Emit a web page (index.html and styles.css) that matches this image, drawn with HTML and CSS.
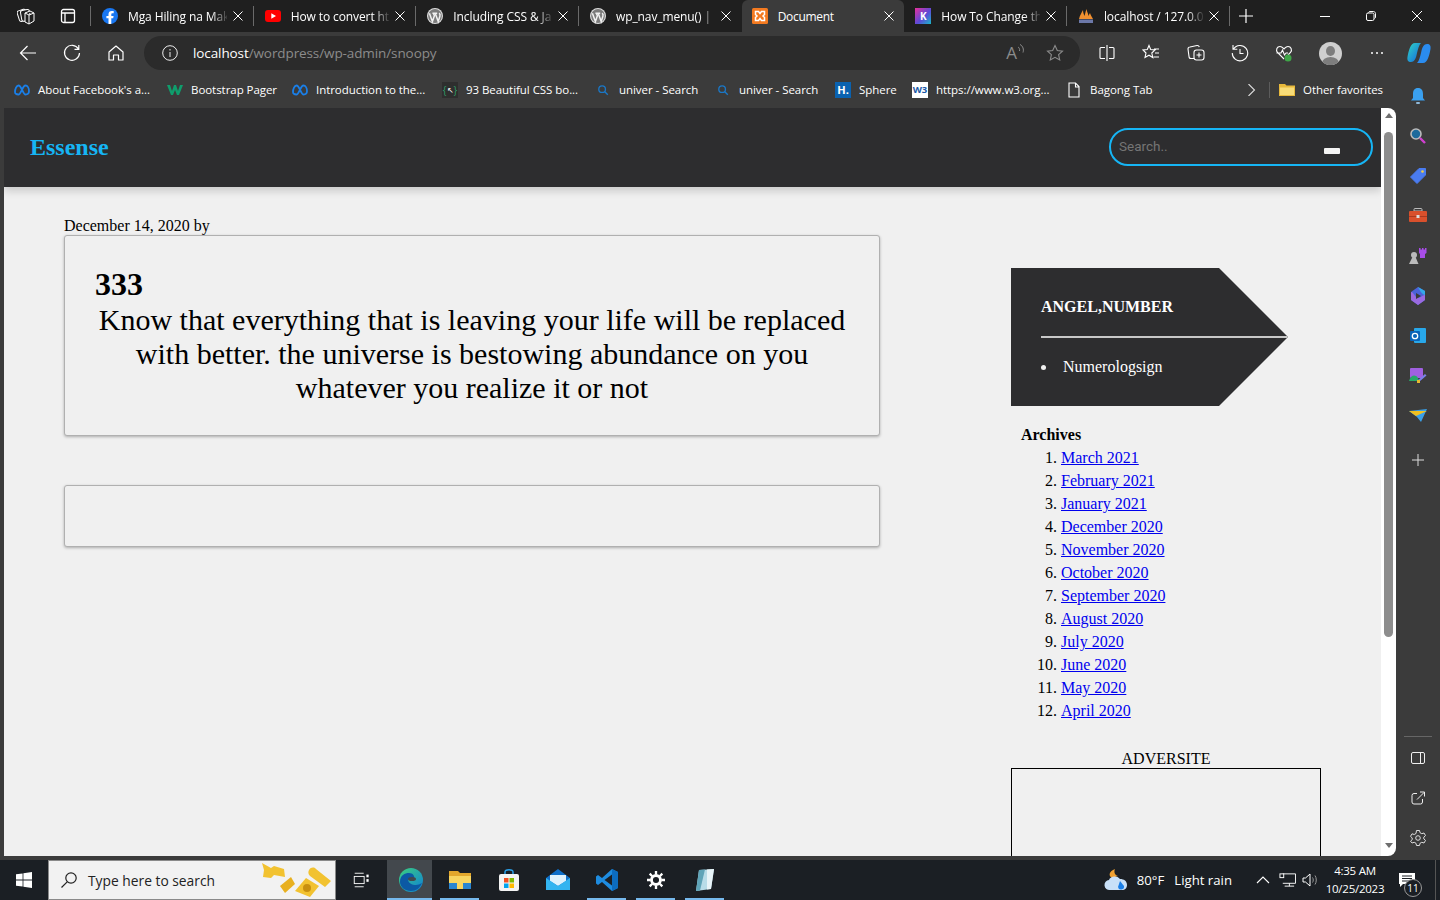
FILE: index.html
```html
<!DOCTYPE html>
<html lang="en">
<head>
  <meta charset="UTF-8" />
  <meta name="viewport" content="width=device-width, initial-scale=1.0" />
  <title>Document</title>
  <link rel="stylesheet" href="styles.css">
</head>
<body>
  <svg class="defs" width="0" height="0">
    <defs>
      <symbol id="x" viewBox="0 0 12 12"><path d="M1.5 1.5l9 9M10.5 1.5l-9 9" fill="none" stroke="currentColor" stroke-width="1"/></symbol>
      <symbol id="wp" viewBox="0 0 16 16"><circle cx="8" cy="8" r="8" fill="#dedede"/><circle cx="8" cy="8" r="6.9" fill="#7c7c7c"/><path d="M2.4 5.2l3 8.300 2-5.700-1-2.600h-1M5.800 5.200h4.400M8.200 5.200l3 8.300 1.700-5.200c.5-1.600-.1-2.600-.8-3.100" fill="none" stroke="#f2f2f2" stroke-width="1.500"/></symbol>
      <symbol id="meta" viewBox="0 0 16 12"><path d="M1 8C1 5 2.500 1.500 4.500 1.500c3 0 4.500 9 7 9 1.500 0 3.500-1 3.500-3.500 0-3-1.500-5.500-3.500-5.500-3 0-4.500 9-7 9C2 10.500 1 9.500 1 8z" fill="none" stroke="#1a7fe8" stroke-width="1.800"/></symbol>
      <symbol id="mag" viewBox="0 0 16 16"><circle cx="7" cy="7" r="3.800" fill="none" stroke="#1a78c8" stroke-width="1.500"/><path d="M10 10l3.500 3.500" stroke="#1a78c8" stroke-width="1.500"/></symbol>
    </defs>
  </svg>

  <!-- browser tabs -->
  <div class="tabstrip">
    <div class="strip-start">
      <svg class="ico18" viewBox="0 0 18 18" fill="none" stroke="#fff" stroke-width="1"><rect x="1" y="3" width="9" height="11" rx="2" transform="rotate(-18 5 8)"/><rect x="4" y="3" width="9" height="11" rx="2" transform="rotate(-10 8 8)" fill="#1f1f1f"/><path d="M8 6l5-2 4 2v8l-5 3-4-2zM12 8v9M8 6l4 2 5-2" fill="#1f1f1f"/></svg>
      <svg class="ico16" viewBox="0 0 16 16" fill="none" stroke="#fff" stroke-width="1.300"><rect x="1.500" y="1.500" width="13" height="13" rx="2"/><path d="M1.500 5h13M5 5v9.500"/></svg>
    </div>
    <div class="tab">
      <svg class="ico16" viewBox="0 0 16 16"><circle cx="8" cy="8" r="8" fill="#1877f2"/><path d="M9.300 16V10.300h1.900l.4-2.400H9.300V6.400c0-.7.300-1.200 1.300-1.200h1.100V3.100s-1-.2-2-.2C7.700 2.900 6.500 4.100 6.500 6.200v1.700H4.400v2.400h2.100V16z" fill="#fff"/></svg>
      <span class="tab-title">Mga Hiling na Mak</span>
      <svg class="tab-close"><use href="#x"/></svg>
    </div>
    <div class="tab">
      <svg class="ico16" viewBox="0 0 16 12"><rect width="16" height="12" rx="3" fill="#f00"/><path d="M6.300 3.300L11 6l-4.700 2.700z" fill="#fff"/></svg>
      <span class="tab-title">How to convert htr</span>
      <svg class="tab-close"><use href="#x"/></svg>
    </div>
    <div class="tab">
      <svg class="ico16"><use href="#wp"/></svg>
      <span class="tab-title">Including CSS &amp; Ja</span>
      <svg class="tab-close"><use href="#x"/></svg>
    </div>
    <div class="tab tab-before-active">
      <svg class="ico16"><use href="#wp"/></svg>
      <span class="tab-title">wp_nav_menu() | F</span>
      <svg class="tab-close"><use href="#x"/></svg>
    </div>
    <div class="tab tab-active">
      <svg class="ico16" viewBox="0 0 16 16"><rect width="16" height="16" rx="1.500" fill="#f37a20"/><path d="M3.500 3.500h3l1.500 2 1.500-2h3v3l-1.500 1.500 1.500 1.500v3h-3L8 10.500l-1.500 2h-3v-3L5 8 3.500 6.500z" fill="none" stroke="#fff" stroke-width="1.500"/></svg>
      <span class="tab-title tab-title-full">Document</span>
      <svg class="tab-close"><use href="#x"/></svg>
    </div>
    <div class="tab">
      <span class="fav-k">K</span>
      <span class="tab-title">How To Change th</span>
      <svg class="tab-close"><use href="#x"/></svg>
    </div>
    <div class="tab">
      <svg class="ico16" viewBox="0 0 16 16"><path d="M1 11C2 7 3.500 5 5 2c0 3 1 4 1.500 6C7 6 7.500 4 8.500 1c.5 3 1.500 4 2 7 .5-1.500 1-2.500 1.500-3 .5 2 2 4 3 6z" fill="#f09030"/><rect x="1" y="11.500" width="14" height="3.500" fill="#6c78a8"/></svg>
      <span class="tab-title">localhost / 127.0.0.</span>
      <svg class="tab-close"><use href="#x"/></svg>
    </div>
    <svg class="new-tab" viewBox="0 0 14 14" fill="none" stroke="#fff" stroke-width="1.200"><path d="M7 0v14M0 7h14"/></svg>
    <div class="window-controls">
      <svg class="ico10" viewBox="0 0 10 10" stroke="#fff" fill="none"><path d="M0 5.500h10"/></svg>
      <svg class="ico10" viewBox="0 0 10 10" stroke="#fff" fill="none"><rect x=".5" y="2" width="7.500" height="7.500" rx="1.500"/><path d="M2.500 1.500c.3-.7.800-1 1.500-1h3.500c1 0 2 1 2 2V6c0 .7-.3 1.200-1 1.500"/></svg>
      <svg class="ico10" viewBox="0 0 10 10" stroke="#fff" fill="none"><path d="M0 0l10 10M10 0L0 10"/></svg>
    </div>
  </div>

  <!-- address bar row -->
  <div class="toolbar">
    <svg class="ico20 nav-back" viewBox="0 0 18 18" fill="none" stroke="#fff" stroke-width="1.200"><path d="M17 9H1.500M8.500 2l-7 7 7 7"/></svg>
    <svg class="ico20 nav-reload" viewBox="0 0 18 18" fill="none" stroke="#fff" stroke-width="1.200"><path d="M15.500 5A7.500 7.500 0 1 0 16.500 9M15.800 1v4.300h-4.300"/></svg>
    <svg class="ico20 nav-home" viewBox="0 0 18 18" fill="none" stroke="#fff" stroke-width="1.200"><path d="M2 8l7-6 7 6v8h-4.500v-5h-5v5H2z" stroke-linejoin="round"/></svg>
    <div class="address">
      <svg class="ico16 addr-info" viewBox="0 0 16 16" fill="none" stroke="#eee"><circle cx="8" cy="8" r="7.300"/><path d="M8 7v5M8 4v1.500"/></svg>
      <span class="url"><span class="url-host">localhost</span>/wordpress/wp-admin/snoopy</span>
      <span class="read-aloud">A<svg class="waves" viewBox="0 0 8 12" fill="none" stroke="#8c8c8c"><path d="M1 4c1 .5 2 2 1.500 4M3 1.500c3 1.500 4 5 3 8"/></svg></span>
      <svg class="ico18 addr-star" viewBox="0 0 18 18" fill="none" stroke="#8c8c8c" stroke-width="1.100"><path d="M9 1.500l2.300 5 5.200.6-3.900 3.600 1.100 5.300L9 13.300 4.300 16l1.100-5.300L1.500 7.100l5.200-.6z"/></svg>
    </div>
    <div class="tool-icons">
      <svg class="ico18" viewBox="0 0 18 18" fill="none" stroke="#fff" stroke-width="1.100"><path d="M9 1v16M7 3.500H3a1 1 0 0 0-1 1v9a1 1 0 0 0 1 1h4M11 3.500h4a1 1 0 0 1 1 1v9a1 1 0 0 1-1 1h-4"/></svg>
      <svg class="ico18" viewBox="0 0 18 18" fill="none" stroke="#fff" stroke-width="1.100"><path d="M7 1.500l1.700 4 4.300.5-3.200 3 1 4.500L7 11.200 3 13.500l1-4.500L1 6l4.300-.5zM12 5h5M13 9h4M11.500 13h5.500"/></svg>
      <svg class="ico18" viewBox="0 0 18 18" fill="none" stroke="#fff" stroke-width="1.100"><path d="M7 14.500H4a2 2 0 0 1-2-2L1 5a2 2 0 0 1 2-2l7-1.500c1-.2 2 .5 2.300 1.500"/><rect x="7" y="6" width="10" height="10" rx="2.500"/><path d="M12 8.500v5M9.500 11h5"/></svg>
      <svg class="ico18" viewBox="0 0 18 18" fill="none" stroke="#fff" stroke-width="1.100"><path d="M2.500 5A7.700 7.700 0 1 1 1.300 9M2 1v4.300h4.300M9 5v4.500h3.500"/></svg>
      <svg class="ico18" viewBox="0 0 18 18" fill="none" stroke="#fff" stroke-width="1.100"><path d="M9 15L2.500 8.500C.5 6 2 2.500 5 2.500c2 0 3 1.500 4 2.500 1-1 2-2.500 4-2.500 3 0 4.500 3.500 2.500 6L13 11M1.500 9H6l1.500-3 2 5 1.500-2h2"/><circle cx="13" cy="14" r="3.500" fill="#3fa648" stroke="none"/></svg>
    </div>
    <div class="avatar"><span class="avatar-head"></span><span class="avatar-body"></span></div>
    <svg class="tool-dots" viewBox="0 0 14 4" fill="#fff"><circle cx="2" cy="2" r="1"/><circle cx="7" cy="2" r="1"/><circle cx="12" cy="2" r="1"/></svg>
    <svg class="copilot" viewBox="0 0 24 22">
      <defs><linearGradient id="cop" x1="0" y1="0" x2="1" y2="1"><stop offset="0" stop-color="#2fd6c4"/><stop offset="1" stop-color="#1464e0"/></linearGradient></defs>
      <path d="M8 1h6c-2 2-3 6-4 10-1 6-3 9-6 9-3 0-4-2-3.500-5C1.500 9 3.500 1 8 1z" fill="url(#cop)"/><path d="M16 21h-6c2-2 3-6 4-10 1-6 3-9 6-9 3 0 4 2 3.500 5-1 6-3 14-7.500 14z" fill="#2a8cf0"/>
    </svg>
  </div>

  <!-- favorites -->
  <div class="favbar">
    <div class="fav"><svg class="fav-meta"><use href="#meta"/></svg><span>About Facebook's a...</span></div>
    <div class="fav"><svg class="ico16" viewBox="0 0 16 12"><path d="M0 1h3l2 6 2-6h2l2 6 2-6h3l-4 10h-2L8 6l-2 5H4z" fill="#0f9d6c"/></svg><span>Bootstrap Pager</span></div>
    <div class="fav"><svg class="fav-meta"><use href="#meta"/></svg><span>Introduction to the...</span></div>
    <div class="fav"><span class="fav-css">{<i>↖</i>}</span><span>93 Beautiful CSS bo...</span></div>
    <div class="fav fav-wide"><svg class="ico14"><use href="#mag"/></svg><span>univer - Search</span></div>
    <div class="fav fav-wide"><svg class="ico14"><use href="#mag"/></svg><span>univer - Search</span></div>
    <div class="fav"><span class="fav-h">H.</span><span>Sphere</span></div>
    <div class="fav"><span class="fav-w3">W3</span><span>https://www.w3.org...</span></div>
    <div class="fav"><svg class="ico16" viewBox="0 0 16 16" fill="none" stroke="#fff" stroke-width="1.100"><path d="M3 1h6.500L13 4.500V15H3zM9.500 1v4H13"/></svg><span>Bagong Tab</span></div>
    <div class="fav-end">
      <svg class="ico12" viewBox="0 0 12 12" fill="none" stroke="#ddd" stroke-width="1.100"><path d="M3.500 0l6 6-6 6"/></svg>
      <span class="fav-sep"></span>
      <svg class="ico16" viewBox="0 0 16 16"><path d="M0 2h6l1.500 1.500H16V14H0z" fill="#e8b93c"/><path d="M1 5.500h14V13H1z" fill="#f8dc78"/></svg>
      <span class="fav-other">Other favorites</span>
    </div>
  </div>

  <div class="browser-body">
    <div class="viewport">
      <div class="page">
        <header class="site-header">
          <h1 class="logo">Essense</h1>
          <div class="search">
            <span class="search-hint">Search..</span>
            <span class="search-btn"></span>
          </div>
        </header>

        <div class="content">
          <main class="posts">
            <div class="post-meta">December 14, 2020 by</div>
            <article class="card card-quote">
              <h2>333</h2>
              <p>Know that everything that is leaving your life will be replaced with better. the universe is bestowing abundance on you whatever you realize it or not</p>
            </article>
            <article class="card card-empty"></article>
          </main>

          <aside class="sidebar">
            <div class="arrow-box">
              <h4>ANGEL,NUMBER</h4>
              <hr>
              <ul>
                <li>Numerologsign</li>
              </ul>
            </div>
            <div class="archives">
              <strong>Archives</strong>
              <ol>
                <li><a href="#">March 2021</a></li>
                <li><a href="#">February 2021</a></li>
                <li><a href="#">January 2021</a></li>
                <li><a href="#">December 2020</a></li>
                <li><a href="#">November 2020</a></li>
                <li><a href="#">October 2020</a></li>
                <li><a href="#">September 2020</a></li>
                <li><a href="#">August 2020</a></li>
                <li><a href="#">July 2020</a></li>
                <li><a href="#">June 2020</a></li>
                <li><a href="#">May 2020</a></li>
                <li><a href="#">April 2020</a></li>
              </ol>
            </div>
            <div class="advert">
              <div class="advert-title">ADVERSITE</div>
              <div class="advert-box"></div>
            </div>
          </aside>
        </div>
      </div>
    </div>

    <div class="scrollbar">
      <span class="arrow-up"></span>
      <div class="scroll-track"><div class="scroll-thumb"></div></div>
      <span class="arrow-down"></span>
    </div>

    <!-- edge sidebar -->
    <div class="edge-side">
      <div class="edge-top">
        <svg class="ico18" viewBox="0 0 18 18"><path d="M9 1c3.500 0 5 2.500 5 6v4l2 2.500H2L4 11V7c0-3.500 1.500-6 5-6z" fill="#3aa0f0"/><rect x="7" y="15" width="4" height="2" rx="1" fill="#8fb8d8"/></svg>
        <svg class="ico18" viewBox="0 0 18 18"><circle cx="7" cy="7" r="5" fill="#1d6a9c" stroke="#bbb" stroke-width="1.600"/><path d="M11 11l5 5" stroke="#d040d0" stroke-width="2.400"/></svg>
        <svg class="ico18" viewBox="0 0 18 18"><path d="M10 1.500h6.500V8L8 16.500 1.500 10z" fill="#4a7cf0" stroke="#4a7cf0" stroke-linejoin="round"/><circle cx="13.500" cy="4.500" r="1.300" fill="#f5d040"/></svg>
        <svg class="ico18" viewBox="0 0 18 18"><path d="M6 1.500h6c.8 0 1 .5 1 1V4H5V2.500c0-.5.200-1 1-1z" fill="none" stroke="#bbb"/><rect y="4" width="18" height="11" rx="1" fill="#d8502c"/><rect y="9" width="18" height="1" fill="#a83a20"/><rect x="7.500" y="8" width="3" height="3" fill="#ddd"/></svg>
        <svg class="ico18" viewBox="0 0 18 18"><circle cx="5" cy="8" r="3" fill="#bbb"/><path d="M3.500 10h3l3 7H0z" fill="#bbb"/><path d="M10 1h1.500v1.500H13V1h1.500v1.500H16V1h1.500v5L16 7v4h-5V7l-1-1z" fill="#a84de8"/></svg>
        <svg class="ico18" viewBox="0 0 18 18"><path d="M9 0l7 4v9l-7 5-7-5V5z" fill="#4a62d8"/><path d="M2 5c3 0 4 6 7 6s4-3 7-3v5l-7 5-7-5z" fill="#9a6ae0"/><path d="M9 0l7 4v4c-3-.500-5-4-7-8z" fill="#34a8e8"/><path d="M7 6l5 3-5 3z" fill="#3a3a3a"/></svg>
        <svg class="ico18" viewBox="0 0 18 18"><rect x="5" y="1" width="12" height="15" rx="1" fill="#28a8ea"/><rect x="1" y="4" width="10" height="10" rx="1" fill="#0a64b8"/><circle cx="6" cy="9" r="2.700" fill="none" stroke="#fff" stroke-width="1.300"/></svg>
        <svg class="ico18" viewBox="0 0 18 18"><rect x="1" y="1" width="13" height="10" rx="1" fill="#a060e0"/><path d="M0 14c2-6 6-7 9-3l1 3z" fill="#28a868"/><path d="M8 14l8-7 1.500 1.500L10 15z" fill="#7a80e8"/><rect x="8" y="13" width="3" height="3" fill="#e8b830"/></svg>
        <svg class="ico18" viewBox="0 0 18 18"><path d="M0 4l18-2-6 13-4-5z" fill="#3aa0e8"/><path d="M0 4h18L7 9z" fill="#f0c020"/></svg>
        <svg class="ico14 edge-add" viewBox="0 0 14 14" stroke="#ddd" fill="none"><path d="M7 1v12M1 7h12"/></svg>
      </div>
      <div class="edge-bottom">
        <span class="edge-sep"></span>
        <svg class="ico14" viewBox="0 0 14 14" fill="none" stroke="#eee"><rect x=".5" y="1.500" width="13" height="11" rx="1.500"/><path d="M9.500 1.500v11"/></svg>
        <svg class="ico14" viewBox="0 0 14 14" fill="none" stroke="#eee"><path d="M6 2.500H3a2 2 0 0 0-2 2V11a2 2 0 0 0 2 2h6.500a2 2 0 0 0 2-2V8M6 8.500L13 1.500M9 1h4.500v4.500"/></svg>
        <svg class="ico18 edge-gear" viewBox="0 0 18 18" fill="none" stroke="#ddd"><path d="M7.500 1.500h3l.5 2.200 1.800 1 2.200-.7 1.500 2.600-1.700 1.500v1.800l1.700 1.500-1.500 2.600-2.200-.7-1.800 1-.5 2.200h-3l-.5-2.200-1.800-1-2.200.7L1.500 12.200l1.700-1.500V8.900L1.500 7.400 3 4.800l2.200.7 1.800-1z"/><circle cx="9" cy="9" r="2.300"/></svg>
      </div>
    </div>
  </div>

  <!-- windows taskbar -->
  <footer class="taskbar">
    <div class="start"><svg class="ico16" viewBox="0 0 16 16" fill="#fff"><path d="M0 2.300l6.600-.9v6.200H0zM7.400 1.300L16 0v7.600H7.400zM0 8.400h6.600v6.200L0 13.700zM7.400 8.400H16V16l-8.600-1.200z"/></svg></div>
    <div class="task-search">
      <svg class="ico18" viewBox="0 0 18 18" fill="none" stroke="#222" stroke-width="1.200"><circle cx="11" cy="7" r="5.200"/><path d="M7.200 10.800L1.500 16.500"/></svg>
      <span class="task-search-text">Type here to search</span>
      <svg class="pasta" viewBox="0 0 72 36">
        <path d="M2 1l9 5 3-2 10 3 1 8-11-2-3 3-8-1 1-7z" fill="#f2c230"/>
        <path d="M20 24l11-9 4 7-10 9z" fill="#e8b020"/>
        <path d="M46 16l13 8-9 11-15-6z" fill="#f2c230"/><circle cx="47" cy="26" r="4" fill="#c89010"/>
        <path d="M49 8c2-3 5-3 7-1l15 12-6 6-15-11c-2-2-2-4-1-6z" fill="#f2c230"/>
      </svg>
    </div>
    <div class="task-apps">
      <div class="app"><svg class="ico20" viewBox="0 0 20 20" fill="none" stroke="#fff"><path d="M3 2.500h10M3 17.500h10"/><rect x="2.500" y="6" width="11" height="8"/><rect x="16" y="4" width="2.500" height="3" fill="#fff" stroke="none"/><rect x="16" y="9" width="2.500" height="3" fill="#fff" stroke="none"/></svg></div>
      <div class="app app-edge app-open">
        <svg class="ico26" viewBox="0 0 26 26"><defs><linearGradient id="edg" x1="0" y1="0" x2="1" y2="1"><stop offset="0" stop-color="#3bd07c"/><stop offset="1" stop-color="#0f7fd8"/></linearGradient></defs><circle cx="13" cy="13" r="12" fill="url(#edg)"/><path d="M2 15C2 8 7 6 11 6c4 0 6 3 5 6h-6c0 4 4 6 8 6 2 0 4-1 6-2-2 5-6 8-11 8C7 24 2 20 2 15z" fill="#0c59a4"/><ellipse cx="14" cy="12" rx="4" ry="2" fill="#43484d"/></svg>
      </div>
      <div class="app app-open">
        <svg class="ico24" viewBox="0 0 24 24"><path d="M1 3h9l2 2h11v16H1z" fill="#e3a72c"/><path d="M1 8h22v13H1z" fill="#f8d560"/><rect x="1" y="15" width="22" height="6" fill="#2a85d0"/><rect x="9" y="15" width="6" height="6" fill="#f8d560"/></svg>
      </div>
      <div class="app">
        <svg class="ico24" viewBox="0 0 24 24"><path d="M8 7V4c0-3 8-3 8 0v3" fill="none" stroke="#2aa0e8" stroke-width="1.500"/><rect x="2" y="6" width="20" height="17" rx="2" fill="#f4f4f4"/><rect x="7" y="10" width="4.500" height="4.500" fill="#f25022"/><rect x="12.500" y="10" width="4.500" height="4.500" fill="#7fba00"/><rect x="7" y="15.500" width="4.500" height="4.500" fill="#00a4ef"/><rect x="12.500" y="15.500" width="4.500" height="4.500" fill="#ffb900"/></svg>
      </div>
      <div class="app">
        <svg class="ico24" viewBox="0 0 24 24"><path d="M12 1l12 9v12H0V10z" fill="#0f6fc8"/><path d="M4 7h16v6l-8 5-8-5z" fill="#dff2fc"/><path d="M0 10l12 8 12-8v12H0z" fill="#33b4f0"/></svg>
      </div>
      <div class="app app-open">
        <svg class="ico24" viewBox="0 0 24 24"><path d="M17 1l6 3v16l-6 3L7 14l-4 3-2-1.500V8.500L3 7l4 3z" fill="#1e8ce0"/><path d="M17 6.500v11L9.500 12z" fill="#1b1f24"/><path d="M17 1l6 3v16l-6 3z" fill="#0c6cc0"/></svg>
      </div>
      <div class="app app-open">
        <svg class="ico20" viewBox="0 0 20 20" fill="none" stroke="#fff" stroke-width="3.200"><circle cx="10" cy="10" r="5"/><path d="M10 0v4M10 16v4M0 10h4M16 10h4M3 3l2.800 2.800M14.200 14.200L17 17M17 3l-2.800 2.800M5.800 14.200L3 17" stroke-width="2.600"/></svg>
      </div>
      <div class="app app-open">
        <svg class="ico24" viewBox="0 0 24 24"><path d="M6 2l15-1-3 20-15 2z" fill="#b8dce8"/><path d="M6 2l6-.4L7 22.500l-4 .5z" fill="#5fa4b8"/><path d="M14 1.500l7-.5-3 20-4 .5z" fill="#e8f4f8"/></svg>
      </div>
    </div>
    <div class="tray">
      <div class="weather">
        <svg class="ico26" viewBox="0 0 26 24"><path d="M12 1c-1 2-1 6 3 7l-6 2C5 8 6 3 12 1z" fill="#f0a030"/><path d="M7 22a5 5 0 0 1-1-10c1-4 8-5 11-1 4 0 7 2 7 6 0 3-2 5-5 5z" fill="#c8e0f8"/><path d="M17 13l4 5a3 3 0 1 1-6 1z" fill="#1a7fe8"/></svg>
        <span>80°F</span>
        <span class="weather-text">Light rain</span>
      </div>
      <svg class="ico14 tray-up" viewBox="0 0 14 14" fill="none" stroke="#fff" stroke-width="1.100"><path d="M1 10l6-6 6 6"/></svg>
      <svg class="ico16 tray-net" viewBox="0 0 18 16" fill="none" stroke="#fff"><path d="M4 1.500h13.500v10H4M11 11.500v3M6 14.500h10"/><rect x="1" y="1.500" width="4" height="4" fill="#1b1f24"/></svg>
      <svg class="ico16 tray-vol" viewBox="0 0 16 16" fill="none" stroke="#fff"><path d="M1 6h2.500L8 2v12l-4.500-4H1z"/><path d="M10.500 5.500c1 1.500 1 3.500 0 5M13 3.500c1.700 2.500 1.700 6.500 0 9" stroke="#999"/></svg>
      <div class="clock">
        <div>4:35 AM</div>
        <div>10/25/2023</div>
      </div>
      <div class="notify">
        <svg class="ico16" viewBox="0 0 16 14" fill="#fff"><path d="M0 0h16v11H4l-3 3v-3H0z"/><path d="M3 3h10M3 5.500h10M3 8h8" stroke="#1b1f24"/></svg>
        <span class="notify-count">11</span>
      </div>
      <span class="show-desktop"></span>
    </div>
  </footer>
</body>
</html>
```

FILE: styles.css
```css
* {
  box-sizing: border-box;
}
:root {
  --chrome: #3b3b3b;
  --strip: #1f1f1f;
  --panel: #2d2d2f;
  --accent: #16b5f5;
  --ui-font: "Open Sans", "Noto Sans", sans-serif;
}
html, body {
  margin: 0;
  height: 900px;
  overflow: hidden;
}
body {
  display: flex;
  flex-direction: column;
  background: var(--chrome);
  font-family: "Liberation Serif", serif;
  font-size: 16px;
  color: #000;
}
svg {
  display: block;
  flex: none;
}
.defs {
  position: absolute;
}
.ico10 { width: 10px; height: 10px; }
.ico12 { width: 12px; height: 12px; }
.ico14 { width: 14px; height: 14px; }
.ico16 { width: 16px; height: 16px; }
.ico18 { width: 18px; height: 18px; }
.ico20 { width: 18px; height: 18px; }
.ico24 { width: 24px; height: 24px; }
.ico26 { width: 26px; height: 26px; }

/* tab strip */
.tabstrip {
  height: 32px;
  flex: none;
  display: flex;
  align-items: center;
  background: var(--strip);
  color: #fff;
  font: 12px var(--ui-font);
  letter-spacing: -0.1px;
}
.strip-start {
  width: 91px;
  height: 20px;
  display: flex;
  align-items: center;
  gap: 25px;
  padding-left: 17px;
  border-right: 1px solid #6a6a6a;
}
.tab {
  width: 162.67px;
  height: 20px;
  display: flex;
  align-items: center;
  gap: 10px;
  padding: 0 9px 0 11px;
  border-right: 1px solid #6a6a6a;
}
.tab-before-active {
  border-right-color: transparent;
}
.tab-active {
  height: 32px;
  padding-left: 10px;
  background: var(--chrome);
  border-radius: 6px 6px 0 0;
  border-right: 0;
}
.tab-title {
  flex: 1;
  min-width: 0;
  margin-right: -5px;
  white-space: nowrap;
  -webkit-mask-image: linear-gradient(90deg, #000 84%, rgba(0, 0, 0, 0.12) 100%);
  mask-image: linear-gradient(90deg, #000 84%, rgba(0, 0, 0, 0.12) 100%);
}
.tab-title-full {
  letter-spacing: -0.3px;
  -webkit-mask-image: none;
  mask-image: none;
}
.tab-close {
  width: 12px;
  height: 12px;
  flex: none;
  color: #fff;
}
.fav-k {
  width: 16px;
  height: 16px;
  flex: none;
  display: flex;
  align-items: center;
  justify-content: center;
  background: linear-gradient(135deg, #e8309c, #5c4ad8 55%, #18b8c8);
  font-size: 10px;
  font-weight: 700;
  color: #fff;
}
.new-tab {
  width: 14px;
  height: 14px;
  margin-left: 9px;
}
.window-controls {
  margin-left: auto;
  display: flex;
  align-items: center;
  gap: 36px;
  padding-right: 18px;
}

/* toolbar */
.toolbar {
  height: 42px;
  flex: none;
  display: flex;
  align-items: center;
  background: var(--chrome);
  padding-left: 19px;
}
.nav-back { margin-right: 26px; }
.nav-reload { margin-right: 26px; }
.nav-home { margin-right: 19px; }
.address {
  width: 936px;
  height: 34px;
  display: flex;
  align-items: center;
  background: #2b2b2b;
  border-radius: 17px;
  padding: 0 16px 0 18px;
  font: 13.5px var(--ui-font);
  letter-spacing: -0.1px;
  color: #8c8c8c;
}
.addr-info { margin-right: 15px; }
.url { flex: 1; }
.url-host { color: #fff; }
.read-aloud {
  display: flex;
  align-items: flex-start;
  font-size: 17px;
  line-height: 20px;
  margin-right: 21px;
  color: #8c8c8c;
}
.waves {
  width: 8px;
  height: 12px;
}
.tool-icons {
  display: flex;
  gap: 26.3px;
  margin-left: 18px;
}
.avatar {
  position: relative;
  width: 23px;
  height: 23px;
  margin-left: 26px;
  border-radius: 50%;
  background: #cfcfcf;
  overflow: hidden;
}
.avatar-head {
  position: absolute;
  left: 7px;
  top: 4px;
  width: 9px;
  height: 10px;
  border-radius: 50%;
  background: #7d7d7d;
}
.avatar-body {
  position: absolute;
  left: 3px;
  top: 15px;
  width: 17px;
  height: 12px;
  border-radius: 50%;
  background: #7d7d7d;
}
.tool-dots {
  width: 14px;
  height: 4px;
  margin-left: 28px;
}
.copilot {
  width: 24px;
  height: 22px;
  margin-left: 23px;
}

/* favorites */
.favbar {
  height: 34px;
  flex: none;
  display: grid;
  grid-template-columns: 153px 125px 150px 154px 120px 119px 77px 154px 179px 1fr;
  align-items: center;
  padding: 0 0 3px 14px;
  background: var(--chrome);
  color: #fff;
  font: 11.5px var(--ui-font);
  letter-spacing: -0.05px;
}
.fav {
  display: flex;
  align-items: center;
  gap: 8px;
  white-space: nowrap;
}
.fav-wide {
  gap: 9px;
}
.fav-meta {
  width: 16px;
  height: 12px;
}
.fav-css {
  width: 16px;
  height: 16px;
  display: flex;
  align-items: center;
  justify-content: center;
  background: #2e2e2e;
  color: #2f9c68;
  font-size: 10px;
}
.fav-css i {
  color: #fff;
  font-style: normal;
  font-size: 8px;
}
.fav-h {
  width: 16px;
  height: 16px;
  background: #0a62b0;
  color: #fff;
  font-weight: 700;
  font-size: 11px;
  line-height: 16px;
  text-align: center;
}
.fav-w3 {
  width: 16px;
  height: 16px;
  background: #fff;
  color: #1a5aa8;
  font-weight: 700;
  font-size: 9.5px;
  line-height: 16px;
  text-align: center;
}
.fav-end {
  display: flex;
  align-items: center;
}
.fav-sep {
  width: 1px;
  height: 16px;
  background: #5c5c5c;
  margin: 0 9px 0 12px;
}
.fav-other {
  margin-left: 8px;
  white-space: nowrap;
}

/* page area */
.browser-body {
  height: 748px;
  flex: none;
  display: flex;
  padding-left: 4px;
}
.viewport {
  width: 1377px;
  overflow: hidden;
  background: #f0f0f0;
}
.page {
  height: 748px;
}
.site-header {
  height: 79px;
  display: flex;
  align-items: center;
  justify-content: space-between;
  padding: 0 8px 0 26px;
  background: var(--panel);
  box-shadow: 0 4px 8px rgba(0, 0, 0, 0.16);
  position: relative;
}
.logo {
  margin: 0;
  font-size: 24px;
  font-weight: 700;
  color: var(--accent);
}
.search {
  width: 264px;
  height: 38px;
  display: flex;
  align-items: center;
  justify-content: space-between;
  border: 2px solid var(--accent);
  border-radius: 19px;
  padding: 0 31px 0 8px;
  margin-top: -1px;
}
.search-hint {
  font: 13.5px Roboto, sans-serif;
  color: #757575;
  margin-top: -2px;
}
.search-btn {
  width: 16px;
  height: 6px;
  margin-top: 8px;
  background: #f4f4f4;
  border-radius: 1px;
}
.content {
  display: flex;
  align-items: flex-start;
  padding-left: 60px;
}
.posts {
  width: 816px;
  padding-top: 30px;
}
.post-meta {
  height: 18px;
}
.card {
  background: #f0f0f0;
  border: 1px solid #b0b0b0;
  border-radius: 3px;
  box-shadow: 0 1px 3px rgba(0, 0, 0, 0.28);
}
.card-quote {
  height: 201px;
  padding: 31px 30px 0;
}
.card-quote h2 {
  margin: 0 0 2px;
  font-size: 32px;
  line-height: 34px;
}
.card-quote p {
  margin: 0;
  font-size: 30px;
  line-height: 34px;
  text-align: center;
}
.card-empty {
  height: 62px;
  margin-top: 49px;
}
.sidebar {
  width: 310px;
  margin-left: 131px;
  padding-top: 81px;
}
.arrow-box {
  width: 277px;
  height: 138px;
  padding: 30px 0 0 30px;
  background: var(--panel);
  color: #fff;
  clip-path: polygon(0 0, 75.1% 0, 100% 50%, 75.1% 100%, 0 100%);
}
.arrow-box h4 {
  margin: 0;
  height: 38px;
  font-size: 16px;
  line-height: 18px;
}
.arrow-box hr {
  height: 2px;
  margin: 0;
  border: 0;
  background: #c8c8c8;
}
.arrow-box ul {
  margin: 20px 0 0;
  padding-left: 22px;
  line-height: 18px;
  list-style: none;
}
.arrow-box li {
  position: relative;
}
.arrow-box li::before {
  content: "";
  position: absolute;
  left: -22px;
  top: 7px;
  width: 5px;
  height: 5px;
  border-radius: 50%;
  background: #f0f0f0;
}
.archives {
  padding: 20px 0 0 10px;
}
.archives strong {
  display: block;
  line-height: 18px;
}
.archives ol {
  margin: 2px 0 0;
  padding-left: 40px;
}
.archives li {
  height: 23px;
  line-height: 23px;
}
.archives a {
  color: #0000ee;
}
.advert {
  margin-top: 28px;
}
.advert-title {
  height: 18px;
  line-height: 18px;
  text-align: center;
}
.advert-box {
  height: 150px;
  border: 1px solid #000;
}

/* scrollbar */
.scrollbar {
  width: 15px;
  display: flex;
  flex-direction: column;
  align-items: center;
  background: #fff;
  border-radius: 0 8px 8px 0;
}
.arrow-up {
  margin-top: 5px;
  border: 4px solid transparent;
  border-top: 0;
  border-bottom: 5px solid #6e6e6e;
  width: 0;
}
.arrow-down {
  margin-bottom: 8px;
  border: 4px solid transparent;
  border-bottom: 0;
  border-top: 5px solid #6e6e6e;
  width: 0;
}
.scroll-track {
  flex: 1;
  width: 100%;
  padding: 14px 3px 0;
}
.scroll-thumb {
  height: 505px;
  background: #8d8d8d;
  border-radius: 5px;
}

/* edge sidebar */
.edge-side {
  width: 44px;
  display: flex;
  flex-direction: column;
  align-items: center;
  justify-content: space-between;
  background: var(--chrome);
}
.edge-top {
  display: flex;
  flex-direction: column;
  align-items: center;
  gap: 22px;
  margin-top: -21px;
  position: relative;
}
.edge-add {
  margin-top: 6px;
}
.edge-bottom {
  display: flex;
  flex-direction: column;
  align-items: center;
  gap: 26px;
  padding-bottom: 9px;
}
.edge-sep {
  width: 28px;
  height: 1px;
  background: #666;
  margin-bottom: -12px;
}
.edge-gear {
  margin-top: -2px;
}

/* taskbar */
.taskbar {
  height: 40px;
  margin-top: 4px;
  flex: none;
  display: flex;
  align-items: stretch;
  background: #1b1f24;
  color: #fff;
  font: 13.2px var(--ui-font);
}
.start {
  width: 48px;
  display: flex;
  align-items: center;
  justify-content: center;
}
.task-search {
  width: 288px;
  display: flex;
  align-items: center;
  padding: 0 3px 0 11px;
  background: #f2f2f2;
  border: 1px solid #8a8a8a;
  color: #222;
  font-size: 13.8px;
}
.task-search-text {
  flex: 1;
  margin-left: 10px;
}
.pasta {
  width: 72px;
  height: 36px;
}
.task-apps {
  display: flex;
}
.app {
  width: 49px;
  display: flex;
  align-items: center;
  justify-content: center;
  position: relative;
}
.app-edge {
  background: #43484d;
  width: 45px;
  margin: 0 3px 0 2px;
  padding-left: 2px;
}
.app-open::after {
  content: "";
  position: absolute;
  left: 5px;
  right: 5px;
  bottom: 0;
  height: 2px;
  background: #76b9ed;
}
.app-edge.app-open::after {
  left: 0;
  right: 0;
}
.tray {
  margin-left: auto;
  display: flex;
  align-items: center;
}
.weather {
  display: flex;
  align-items: center;
  gap: 8px;
}
.weather-text {
  margin-left: 2px;
}
.tray-up {
  margin-left: 24px;
}
.tray-net {
  margin-left: 9px;
  width: 17px;
}
.tray-vol {
  margin-left: 6px;
}
.clock {
  width: 74px;
  margin-left: 0;
  text-align: center;
  font-size: 11.5px;
  line-height: 18px;
  letter-spacing: -0.25px;
}
.notify {
  position: relative;
  margin-left: 7px;
}
.notify-count {
  position: absolute;
  left: 5px;
  top: 7px;
  width: 18px;
  height: 18px;
  border: 1px solid #999;
  border-radius: 50%;
  background: #1b1f24;
  font-size: 10px;
  line-height: 16px;
  text-align: center;
}
.show-desktop {
  width: 1px;
  height: 40px;
  margin-left: 20px;
  margin-right: 4px;
  background: #555;
}
```
